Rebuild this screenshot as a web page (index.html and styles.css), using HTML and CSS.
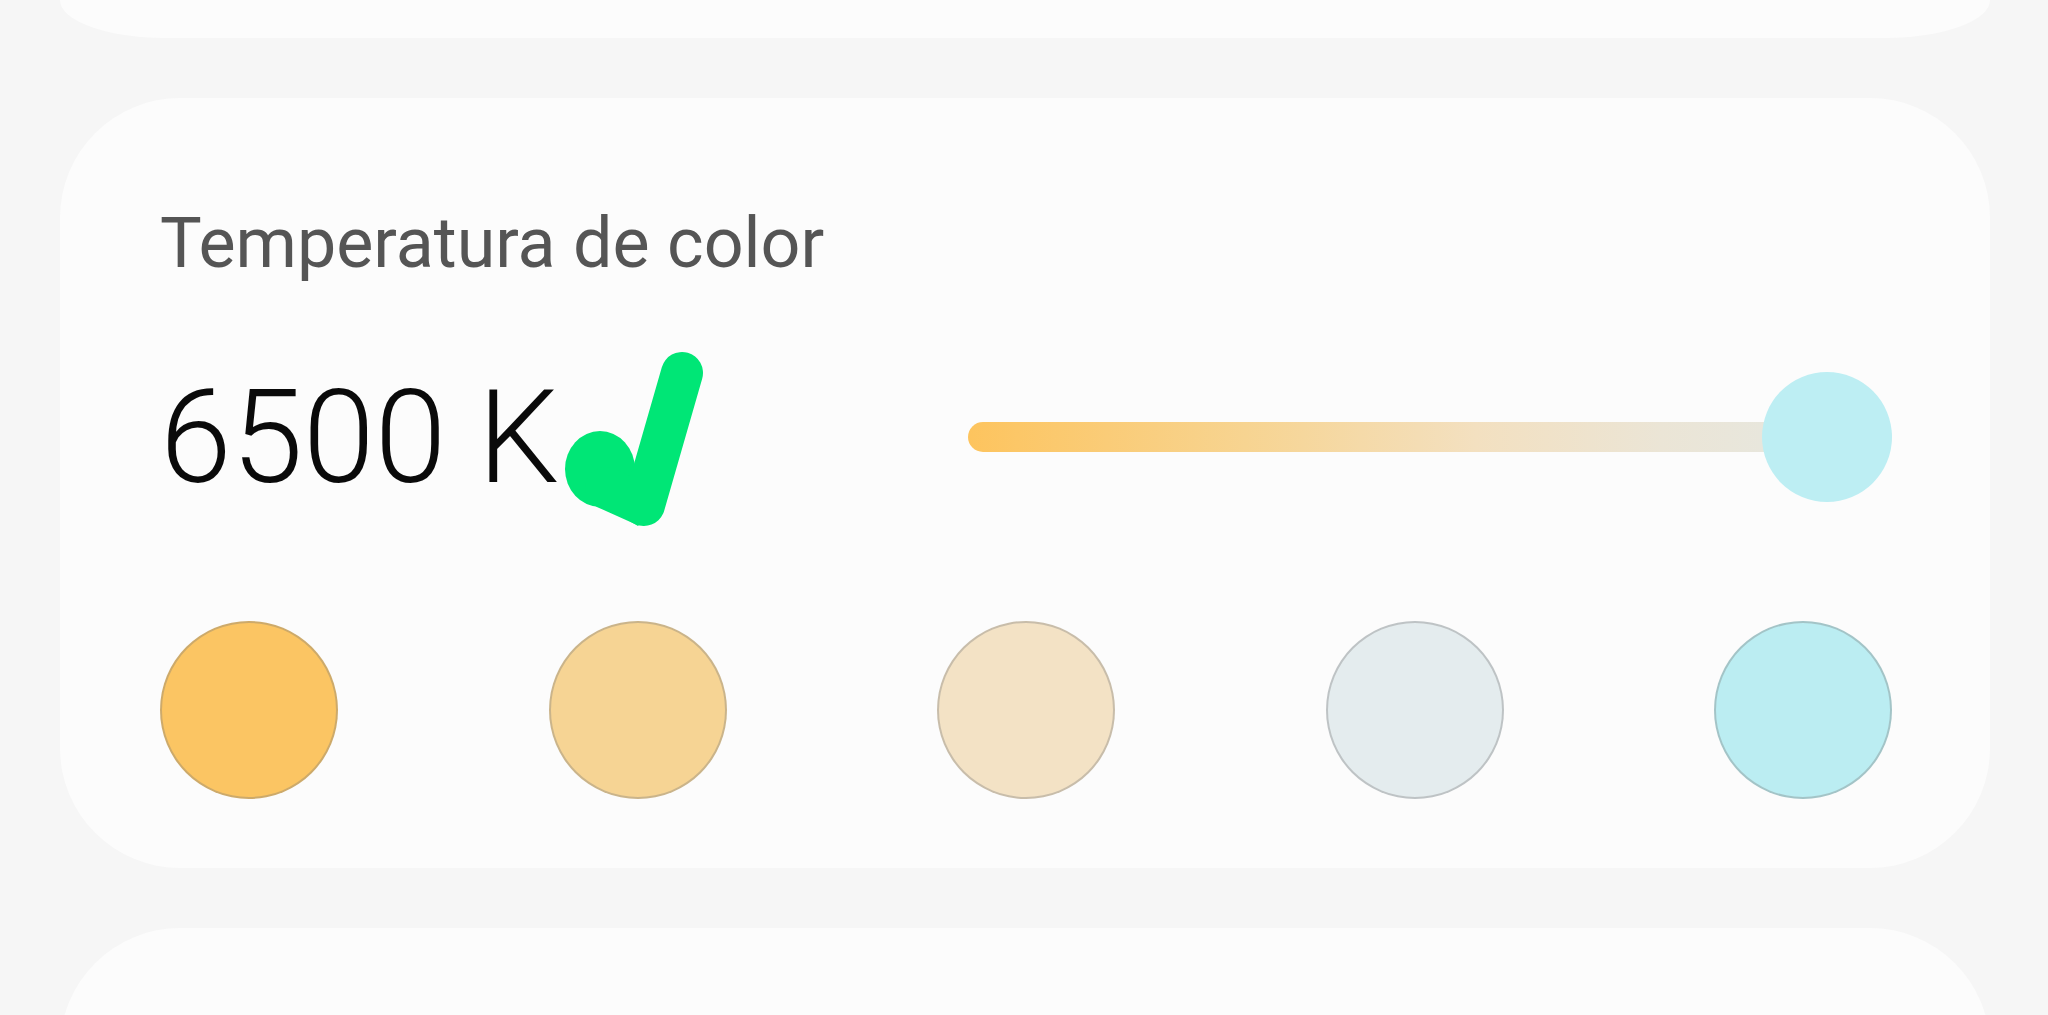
FILE: index.html
```html
<!DOCTYPE html>
<html lang="es">
<head>
<meta charset="utf-8">
<title>Temperatura de color</title>
<link rel="stylesheet" href="styles.css">
</head>
<body>
<div class="page">
  <div class="card card-top"></div>
  <section class="card card-main">
    <h2 class="title">Temperatura de color</h2>
    <div class="value-row">
      <div class="value">6500 K</div>
      <div class="slider">
        <div class="track"></div>
        <div class="thumb"></div>
      </div>
    </div>
    <div class="swatches">
      <span class="swatch s1"></span>
      <span class="swatch s2"></span>
      <span class="swatch s3"></span>
      <span class="swatch s4"></span>
      <span class="swatch s5"></span>
    </div>
    <svg class="check" width="150" height="190" viewBox="0 0 150 190" aria-hidden="true">
      <ellipse cx="40" cy="121" rx="35" ry="38" fill="#00e676"/>
      <polygon points="30,150 78,178 100,150 62,112" fill="#00e676"/>
      <polyline points="46,140 84,157 122,25" fill="none" stroke="#00e676" stroke-width="42" stroke-linecap="round" stroke-linejoin="round"/>
    </svg>
  </section>
  <div class="card card-bottom"></div>
</div>
</body>
</html>
```
FILE: styles.css
```css
html, body {
  margin: 0;
  padding: 0;
  background: #f6f6f6;
  height: 1015px;
  overflow: hidden;
}
.page {
  display: flex;
  flex-direction: column;
  gap: 60px;
  padding: 0 58px 0 60px;
  font-family: Roboto, "Noto Sans", sans-serif;
}
.card {
  background: #fcfcfc;
}
.card-top {
  height: 38px;
  border-radius: 0 0 110px 110px / 0 0 40px 40px;
}
.card-bottom {
  height: 200px;
  border-radius: 120px 120px 0 0;
}
.card-main {
  position: relative;
  border-radius: 120px;
  padding: 104px 98px 69px 100px;
  display: flex;
  flex-direction: column;
}
.title {
  margin: 0;
  font-size: 70px;
  line-height: 83px;
  font-weight: 400;
  color: #555555;
}
.value-row {
  margin-top: 87px;
  height: 130px;
  display: flex;
  align-items: center;
}
.value {
  font-size: 129px;
  font-weight: 300;
  line-height: 1;
  color: #0a0a0a;
}
.slider {
  position: relative;
  margin-left: auto;
  width: 924px;
  height: 130px;
  display: flex;
  align-items: center;
}
.track {
  width: 100%;
  height: 30px;
  border-radius: 15px;
  background: linear-gradient(to right, #fdc45e 0%, #f7d491 30%, #f3e0c0 55%, #ebe5d6 75%, #e4e8e4 100%);
}
.thumb {
  position: absolute;
  right: 0;
  top: 0;
  width: 130px;
  height: 130px;
  border-radius: 50%;
  background: #bdeef3;
}
.swatches {
  margin-top: 119px;
  display: flex;
  justify-content: space-between;
}
.swatch {
  width: 178px;
  height: 178px;
  box-sizing: border-box;
  border-radius: 50%;
  border: 2px solid rgba(120, 120, 120, 0.35);
}
.s1 { background: #fbc563; }
.s2 { background: #f6d494; }
.s3 { background: #f3e2c5; }
.s4 { background: #e4ecee; }
.s5 { background: #bbedf2; }
.check {
  position: absolute;
  left: 500px;
  top: 250px;
}
```
